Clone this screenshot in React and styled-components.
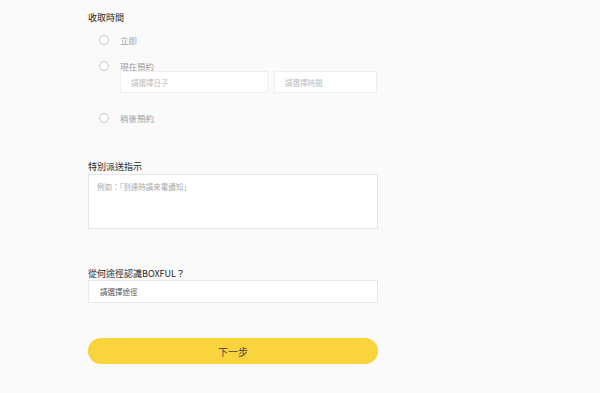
import React from "react";
import styled, { createGlobalStyle } from "styled-components";

const Global = createGlobalStyle`
  html, body { margin: 0; padding: 0; background: #fafafa; }
  body { font-family: "Noto Sans CJK TC", "Noto Sans", sans-serif; }
  * { box-sizing: border-box; }
`;

const Page = styled.div`
  width: 600px;
  height: 393px;
  background: #fafafa;
  overflow: hidden;
`;

const Form = styled.form`
  margin-left: 88px;
  width: 290px;
  padding-top: 12px;
  display: flex;
  flex-direction: column;
`;

const Section = styled.div`
  display: flex;
  flex-direction: column;
  margin-top: ${(p) => p.$top || 0}px;
`;

const Label = styled.div`
  font-size: 9px;
  line-height: 12px;
  height: 12px;
  color: #222;
  white-space: nowrap;
`;

const OptionList = styled.div`
  display: flex;
  flex-direction: column;
  padding-left: 11px;
  margin-top: ${(p) => (p.$top === undefined ? 10 : p.$top)}px;
`;

const Option = styled.label`
  display: flex;
  align-items: center;
  gap: 11px;
  height: 12px;
  margin-top: ${(p) => p.$top || 0}px;
`;

const RadioCircle = styled.span`
  width: 10px;
  height: 10px;
  border-radius: 50%;
  border: 1px solid #c4c4c4;
  background: #fff;
  flex: none;
`;

const OptionText = styled.span`
  font-size: 8.5px;
  line-height: 12px;
  color: #a0a0a0;
`;

const InputRow = styled.div`
  display: flex;
  gap: 6px;
  margin-left: 32px;
  margin-top: -1px;
  margin-bottom: 19px;
`;

const Field = styled.input`
  width: ${(p) => p.$w}px;
  height: 22px;
  border: 1px solid #efefef;
  background: #fff;
  padding: 0 0 0 10px;
  font-family: inherit;
  font-size: 7.5px;
  color: #555;
  outline: none;
  &::placeholder { color: #bcbcbc; }
`;

const TextArea = styled.textarea`
  margin-top: 1px;
  width: 290px;
  height: 55px;
  border: 1px solid #e6e6e6;
  background: #fff;
  padding: 7px 8px;
  font-family: inherit;
  font-size: 7.5px;
  line-height: 10px;
  resize: none;
  outline: none;
  &::placeholder { color: #a8a8a8; }
`;

const Select = styled.select`
  width: 290px;
  height: 23px;
  border: 1px solid #e8e8e8;
  background: #fff;
  padding: 0 0 0 11px;
  font-family: inherit;
  font-size: 7.5px;
  color: #5a5a5a;
  appearance: none;
  -webkit-appearance: none;
  outline: none;
  border-radius: 0;
`;

const SubmitButton = styled.button`
  margin-top: 35px;
  width: 290px;
  height: 26px;
  border: none;
  border-radius: 13px;
  background: #f9d43c;
  font-family: inherit;
  font-size: 10px;
  color: #444;
  cursor: pointer;
`;

export default function App() {
  return (
    <Page>
      <Global />
      <Form onSubmit={(e) => e.preventDefault()}>
        <Section>
          <Label>收取時間</Label>
          <OptionList>
            <Option>
              <RadioCircle />
              <OptionText>立即</OptionText>
            </Option>
            <Option $top={14}>
              <RadioCircle />
              <OptionText>現在預約</OptionText>
            </Option>
          </OptionList>
          <InputRow>
            <Field $w={148} placeholder="請選擇日子" />
            <Field $w={103} placeholder="請選擇時間" />
          </InputRow>
          <OptionList $top={0}>
            <Option>
              <RadioCircle />
              <OptionText>稍後預約</OptionText>
            </Option>
          </OptionList>
        </Section>
        <Section $top={37}>
          <Label>特別派送指示</Label>
          <TextArea placeholder="例如：「到達時請來電通知」" />
        </Section>
        <Section $top={39}>
          <Label>從何途徑認識BOXFUL？</Label>
          <Select defaultValue="">
            <option value="">請選擇途徑</option>
          </Select>
        </Section>
        <SubmitButton type="submit">下一步</SubmitButton>
      </Form>
    </Page>
  );
}
